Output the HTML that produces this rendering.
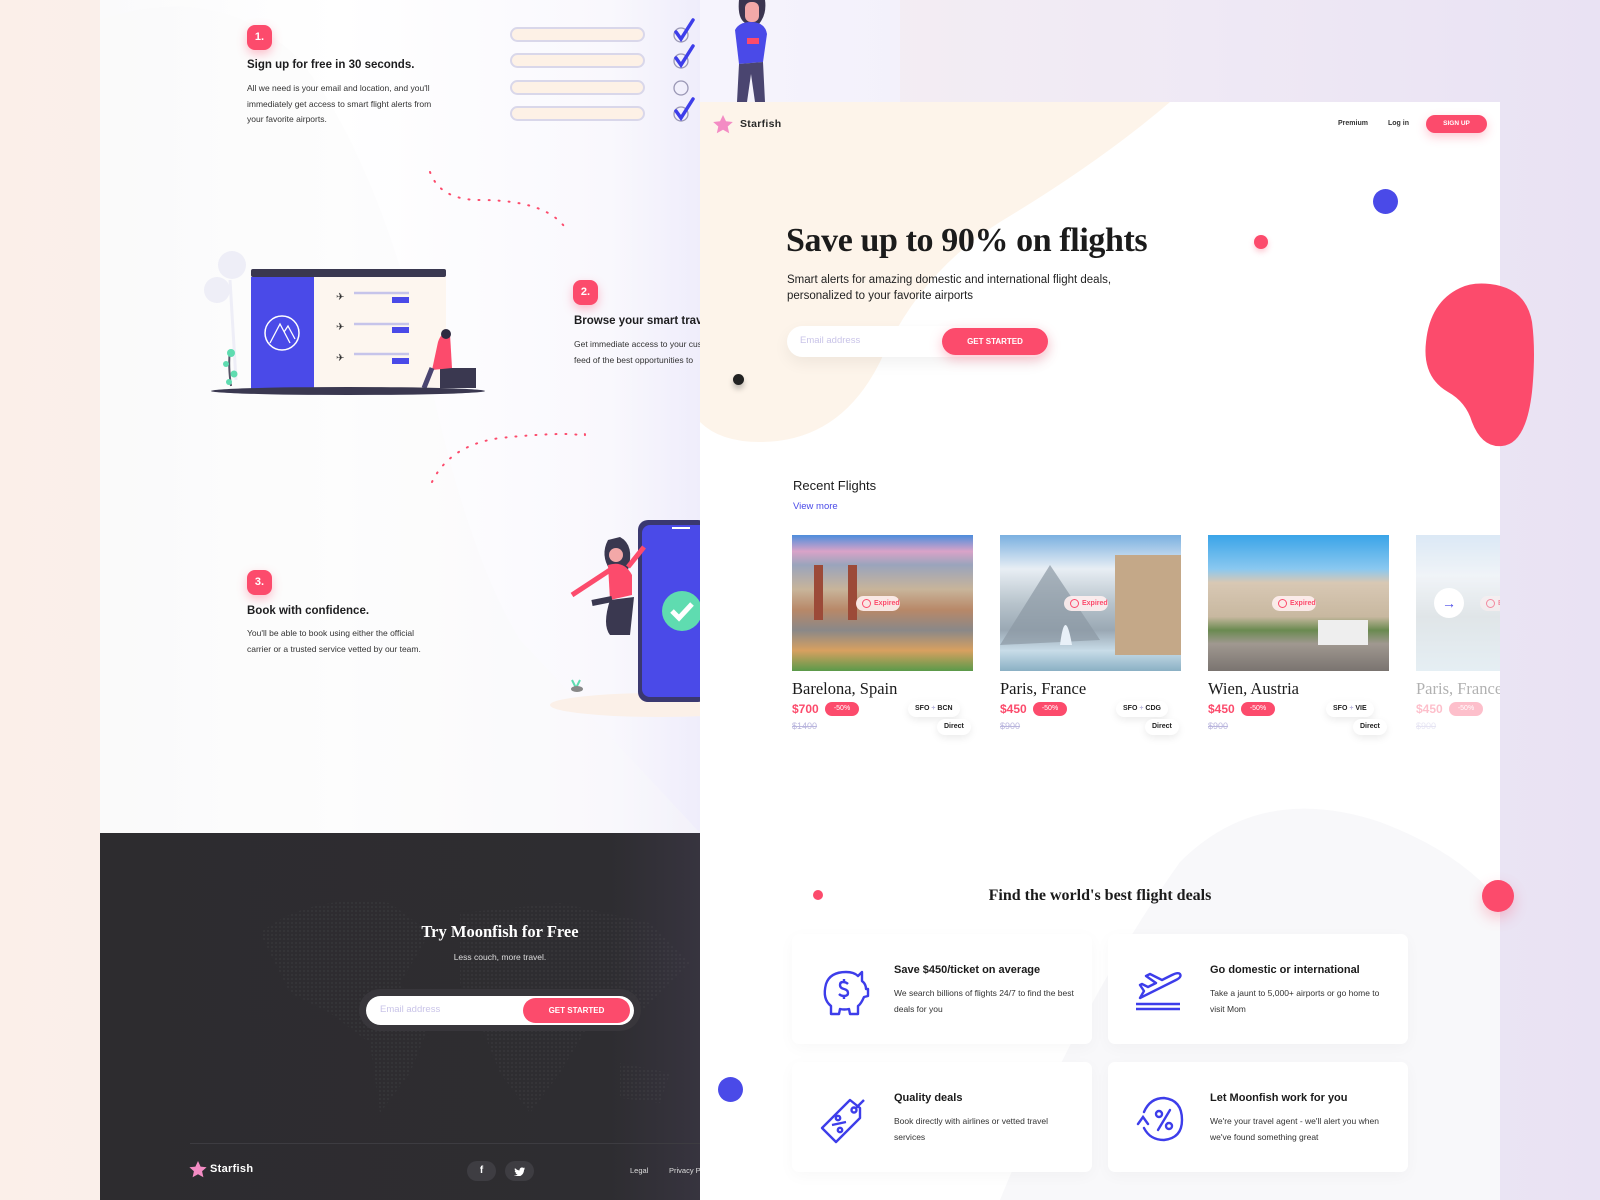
<!DOCTYPE html>
<html><head><meta charset="utf-8">
<style>
*{margin:0;padding:0;box-sizing:border-box}
body{width:1600px;height:1200px;overflow:hidden;position:relative;font-family:"Liberation Sans",sans-serif;color:#222;
background:linear-gradient(90deg,#fbefe9 0%,#f7f0f1 40%,#efe9f5 75%,#e9e2f3 100%)}
.a{position:absolute}
.serif{font-family:"Liberation Serif","DejaVu Serif",serif;font-weight:bold}
.badge{position:absolute;width:25px;height:25px;border-radius:8px;background:#fc4b6c;color:#fff;font-size:11px;font-weight:bold;text-align:center;line-height:25px;box-shadow:0 4px 10px rgba(252,75,108,.35)}
.h3{position:absolute;font-size:11.5px;font-weight:bold;color:#1d1d1f}
.p{position:absolute;font-size:8.5px;line-height:15.5px;color:#333}
.bar{position:absolute;left:510px;width:135px;height:15px;border:2px solid #d9d7ea;border-radius:8px;background:#fdf1e6}
.card{position:absolute;top:535px;width:181px;height:136px;overflow:hidden}
.exp{position:absolute;left:64px;top:61px;width:44px;height:15px;background:rgba(255,240,240,.9);border-radius:8px;color:#fc4b6c;font-size:7px;line-height:15px;padding-left:18px;font-weight:bold}
.exp:before{content:"";position:absolute;left:6px;top:3px;width:7px;height:7px;border:1.3px solid #fc4b6c;border-radius:50%}
.city{position:absolute;top:679px;font-size:16.5px;color:#1b1b1b}
.price{position:absolute;top:702px;font-size:12px;color:#fc4b6c;font-weight:bold}
.off{position:absolute;top:702px;width:34px;height:14px;border-radius:7px;background:#fc4b6c;color:#fff;font-size:7px;text-align:center;line-height:14px}
.old{position:absolute;top:721px;font-size:9px;color:#b9b5dd;text-decoration:line-through}
.route{position:absolute;top:701px;height:16px;padding:0 7px;border-radius:8px;background:#fff;box-shadow:0 3px 8px rgba(0,0,0,.08);font-size:7px;font-weight:bold;line-height:16px;color:#222}
.dir{position:absolute;top:719px;height:16px;padding:0 7px;border-radius:8px;background:#fff;box-shadow:0 3px 8px rgba(0,0,0,.08);font-size:7px;font-weight:bold;line-height:16px}
.feat{position:absolute;width:300px;height:110px;background:#fff;border-radius:7px;box-shadow:0 4px 16px rgba(0,0,0,.03)}
.feat b{position:absolute;left:102px;top:30px;font-size:11px;color:#1b1b1b}
.feat span{position:absolute;left:102px;top:52px;font-size:8.5px;line-height:15.5px;color:#333;width:180px}
.feat svg{position:absolute;left:24px;top:28px}
</style></head><body>

<!-- left panel -->
<div class="a" style="left:100px;top:0;width:600px;height:833px;background:linear-gradient(90deg,#fafafb 0%,#fff 40%,#f9f8fd 85%,#efedfb 100%);overflow:hidden">
  <svg class="a" style="left:0;top:0" width="600" height="833"><path d="M0 20 Q120 -20 200 60 Q280 160 330 380 Q370 560 420 640 L600 833 L0 833Z" fill="#f8f8f9" opacity=".35"/></svg>
</div>
<div class="a" style="left:700px;top:0;width:200px;height:102px;background:linear-gradient(90deg,#f6f4fd,#f3f1fb)"></div>

<div class="badge" style="left:247px;top:25px">1.</div>
<div class="h3" style="left:247px;top:59px">Sign up for free in 30 seconds.</div>
<div class="p" style="left:247px;top:81px">All we need is your email and location, and you'll<br>immediately get access to smart flight alerts from<br>your favorite airports.</div>
<div class="bar" style="top:27px"></div><div class="bar" style="top:53px"></div><div class="bar" style="top:80px"></div><div class="bar" style="top:106px"></div>
<svg class="a" style="left:670px;top:15px" width="30" height="110">
 <g fill="none" stroke="#9a97b5" stroke-width="1.3"><circle cx="11" cy="20" r="7"/><circle cx="11" cy="46" r="7"/><circle cx="11" cy="73" r="7"/><circle cx="11" cy="99" r="7"/></g>
 <g fill="none" stroke="#3d3dea" stroke-width="3.5" stroke-linecap="round"><path d="M6 17l5 7 12-19"/><path d="M6 43l5 7 12-19"/><path d="M6 96l5 7 12-19"/></g>
</svg>
<svg class="a" style="left:725px;top:0" width="60" height="102">
 <path d="M14 0 Q12 20 22 24 L34 24 Q42 14 40 0Z" fill="#3b3550"/>
 <rect x="20" y="2" width="14" height="20" rx="6" fill="#f3a8a8"/>
 <path d="M10 30 Q14 22 26 22 Q40 22 42 34 L38 62 L14 64Z" fill="#4a4ae8"/>
 <rect x="22" y="38" width="12" height="6" fill="#fc4b6c"/>
 <path d="M14 64 L12 102 L22 102 L26 74 L30 102 L40 102 L38 62Z" fill="#4a4570"/>
</svg>

<svg class="a" style="left:420px;top:170px" width="170" height="320">
 <path d="M10 2 Q20 30 60 30 Q130 30 148 62" fill="none" stroke="#fc4b6c" stroke-width="2" stroke-dasharray="1 9" stroke-linecap="round"/>
 <path d="M12 312 Q30 275 80 268 Q140 262 160 265 Q170 268 160 258" fill="none" stroke="#fc4b6c" stroke-width="2" stroke-dasharray="1 9" stroke-linecap="round"/>
</svg>

<svg class="a" style="left:200px;top:240px" width="300" height="160">
 <circle cx="32" cy="25" r="14" fill="#eeeef7"/><circle cx="17" cy="50" r="13" fill="#eeeef7"/><path d="M30 40 L36 140" stroke="#eeeef7" stroke-width="3"/>
 <rect x="51" y="29" width="195" height="121" fill="#fdf6ef"/>
 <rect x="51" y="29" width="195" height="8" rx="2" fill="#3a3850"/>
 <rect x="51" y="37" width="63" height="113" fill="#4a4ae8"/>
 <circle cx="82" cy="93" r="17" fill="none" stroke="#fff" stroke-width="1.5"/><path d="M70 103 L80 84 L90 103 M84 92 L88 86 L95 99" fill="none" stroke="#fff" stroke-width="1.3"/>
 <g fill="#4a4ae8"><rect x="192" y="57" width="17" height="6"/><rect x="192" y="87" width="17" height="6"/><rect x="192" y="118" width="17" height="6"/></g>
 <g stroke="#c6c4ea" stroke-width="2.5"><path d="M154 53h55M154 84h55M154 114h55"/></g>
 <g fill="#333" font-size="10"><text x="136" y="60">✈</text><text x="136" y="90">✈</text><text x="136" y="121">✈</text></g>
 <rect x="240" y="128" width="36" height="20" fill="#3a3850"/>
 <path d="M238 102 Q242 90 250 94 L252 128 L232 130Z" fill="#fc4b6c"/><circle cx="246" cy="94" r="5" fill="#2f2b40"/>
 <path d="M232 128 L224 148" stroke="#4a4570" stroke-width="5"/>
 <ellipse cx="148" cy="151" rx="137" ry="4" fill="#3a3850"/>
 <path d="M31 146 Q28 125 30 110" stroke="#556" stroke-width="2" fill="none"/><g fill="#5fdcb0"><circle cx="31" cy="113" r="4"/><circle cx="26" cy="124" r="3"/><circle cx="34" cy="134" r="3.5"/><circle cx="29" cy="142" r="3"/></g>
</svg>

<div class="badge" style="left:573px;top:280px">2.</div>
<div class="h3" style="left:574px;top:315px;width:126px;overflow:hidden;white-space:nowrap">Browse your smart travel</div>
<div class="p" style="left:574px;top:337px;width:126px;overflow:hidden;white-space:nowrap">Get immediate access to your custom<br>feed of the best opportunities to</div>

<div class="badge" style="left:247px;top:570px">3.</div>
<div class="h3" style="left:247px;top:605px">Book with confidence.</div>
<div class="p" style="left:247px;top:626px">You'll be able to book using either the official<br>carrier or a trusted service vetted by our team.</div>

<svg class="a" style="left:540px;top:515px" width="160" height="210">
 <ellipse cx="120" cy="190" rx="110" ry="12" fill="#fbf0e8"/>
 <rect x="98" y="5" width="70" height="182" rx="10" fill="#3a3870"/>
 <rect x="102" y="10" width="66" height="172" rx="8" fill="#4a4ae8"/>
 <rect x="132" y="12" width="18" height="2" fill="#fff"/>
 <circle cx="142" cy="96" r="20" fill="#5fdcb0"/><path d="M132 96 l7 7 13 -14" stroke="#fff" stroke-width="5" fill="none"/>
 <path d="M68 25 Q60 40 70 55 L88 55 Q95 30 80 22Z" fill="#3a3850"/><circle cx="76" cy="40" r="7" fill="#f3a8a8"/>
 <path d="M68 50 Q84 45 92 60 L92 80 L70 85Z" fill="#fc4b6c"/>
 <path d="M70 55 L32 80" stroke="#fc4b6c" stroke-width="5"/><path d="M88 52 L104 32" stroke="#fc4b6c" stroke-width="5"/>
 <path d="M70 85 Q62 110 70 120 L90 120 L94 82Z" fill="#3a3850"/><path d="M72 84 L52 88" stroke="#3a3850" stroke-width="6"/>
 <path d="M32 165 l4 8 4 -8" stroke="#5fdcb0" stroke-width="2" fill="none"/><ellipse cx="37" cy="174" rx="6" ry="3" fill="#888"/>
</svg>

<!-- dark footer -->
<div class="a" style="left:100px;top:833px;width:600px;height:367px;background:linear-gradient(90deg,#2d2c2f 0%,#2e2d31 85%,#37343f 100%);overflow:hidden">
 <svg class="a" style="left:130px;top:40px" width="470" height="290" opacity=".1">
  <defs><pattern id="dp" width="4" height="4" patternUnits="userSpaceOnUse"><circle cx="2" cy="2" r="1" fill="#888"/></pattern></defs>
  <path d="M30 60 Q80 20 160 30 L200 60 L170 110 L200 150 L180 200 L150 240 L140 170 L100 140 L60 120Z M230 40 L330 30 L420 50 L460 90 L410 140 L360 150 L330 200 L300 240 L270 200 L250 150 L230 110Z M390 190 L440 200 L430 230 L390 225Z" fill="url(#dp)"/>
 </svg>
 <div class="a" style="left:90px;top:310px;width:510px;height:1px;background:#3d3c41"></div>
</div>
<div class="a serif" style="left:350px;top:922px;width:300px;text-align:center;color:#fff;font-size:16.5px">Try Moonfish for Free</div>
<div class="a" style="left:350px;top:952px;width:300px;text-align:center;color:#ddd;font-size:8.5px">Less couch, more travel.</div>
<div class="a" style="left:359px;top:989px;width:282px;height:42px;border-radius:21px;background:#38363b"></div>
<div class="a" style="left:366px;top:996px;width:268px;height:29px;border-radius:15px;background:#fff"></div>
<div class="a" style="left:380px;top:1004px;font-size:9.5px;color:#c9c4e8">Email address</div>
<div class="a" style="left:523px;top:998px;width:107px;height:25px;border-radius:13px;background:#fc4b6c;color:#fff;font-size:8px;font-weight:bold;text-align:center;line-height:25px">GET STARTED</div>
<svg class="a" style="left:189px;top:1161px" width="18" height="17"><path d="M9 0l2.6 5.6 6 .6-4.5 4 1.3 6L9 13.2 3.6 16.2l1.3-6L.4 6.2l6-.6z" fill="#f38cc4"/></svg>
<div class="a" style="left:210px;top:1163px;color:#fff;font-size:11px;font-weight:bold;letter-spacing:.3px">Starfish</div>
<div class="a" style="left:467px;top:1161px;width:29px;height:20px;border-radius:10px;background:#3e3d42;color:#fff;font-size:10px;font-weight:bold;text-align:center;line-height:20px">f</div>
<div class="a" style="left:505px;top:1161px;width:29px;height:20px;border-radius:10px;background:#3e3d42"><svg class="a" style="left:9px;top:6px" width="11" height="9"><path d="M11 1.2c-.4.2-.8.3-1.3.4.5-.3.8-.7 1-1.2-.4.3-.9.4-1.4.5C8.8.3 7.2.2 6.2 1.2 5.6 1.8 5.4 2.6 5.6 3.4 3.8 3.300 2.1 2.5 1 1.1.4 2.1.7 3.4 1.7 4c-.4 0-.7-.1-1-.3 0 1.1.8 2 1.8 2.2-.3.1-.7.1-1 0 .3.9 1.2 1.6 2.1 1.6C2.6 8.3 1.3 8.7 0 8.5 1.1 9.2 2.4 9.6 3.5 9.6c4.2 0 6.6-3.6 6.5-6.8.4-.3.8-.7 1-1.6z" fill="#fff"/></svg></div>
<div class="a" style="left:630px;top:1166px;color:#ddd;font-size:7.5px">Legal</div>
<div class="a" style="left:669px;top:1166px;color:#ddd;font-size:7.5px;width:31px;overflow:hidden;white-space:nowrap">Privacy Policy</div>

<!-- right panel -->
<div class="a" style="left:700px;top:102px;width:800px;height:1098px;background:#fff;overflow:hidden">
 <svg class="a" style="left:0;top:0" width="800" height="1098">
  <path d="M0 0 L470 0 Q400 60 300 120 Q220 170 180 260 Q140 340 60 340 Q20 340 0 320Z" fill="#fdf4ea"/>
  <path d="M300 1098 Q380 900 480 760 Q560 680 680 720 Q760 750 800 800 L800 1098Z" fill="#f8f8fa"/>
 </svg>
</div>
<svg class="a" style="left:713px;top:115px" width="20" height="19"><path d="M10 0l3 6.3 6.8.7-5.1 4.5 1.5 6.8L10 14.8 3.8 18.3l1.5-6.8L.2 7l6.8-.7z" fill="#f38cc4"/></svg>
<div class="a" style="left:740px;top:118px;font-size:10.5px;font-weight:bold;color:#2a2a2a;letter-spacing:.3px">Starfish</div>
<div class="a" style="left:1338px;top:120px;font-size:7px;font-weight:bold;color:#333">Premium</div>
<div class="a" style="left:1388px;top:120px;font-size:7px;font-weight:bold;color:#333">Log in</div>
<div class="a" style="left:1426px;top:115px;width:61px;height:18px;border-radius:9px;background:#fc4b6c;color:#fff;font-size:6.5px;font-weight:bold;text-align:center;line-height:18px;box-shadow:0 4px 10px rgba(252,75,108,.3)">SIGN UP</div>

<div class="a" style="left:1373px;top:189px;width:25px;height:25px;border-radius:50%;background:#4a4ae8"></div>
<div class="a" style="left:1254px;top:235px;width:14px;height:14px;border-radius:50%;background:#fc4b6c;box-shadow:0 3px 6px rgba(252,75,108,.3)"></div>
<div class="a" style="left:733px;top:374px;width:11px;height:11px;border-radius:50%;background:#222;box-shadow:0 4px 6px rgba(0,0,0,.25)"></div>
<svg class="a" style="left:1420px;top:282px" width="140" height="168"><path d="M40 6 Q10 20 6 60 Q2 95 28 110 Q46 120 52 140 Q62 166 82 164 Q106 162 112 110 Q116 70 112 40 Q106 6 70 2 Q52 0 40 6Z" fill="#fc4b6c"/></svg>

<div class="a serif" style="left:786px;top:222px;font-size:34px;color:#1b1b1b;letter-spacing:-.4px">Save up to 90% on flights</div>
<div class="a" style="left:787px;top:273px;font-size:11.5px;line-height:15.5px;color:#222">Smart alerts for amazing domestic and international flight deals,<br>personalized to your favorite airports</div>
<div class="a" style="left:787px;top:326px;width:261px;height:31px;border-radius:16px;background:#fff;box-shadow:0 6px 16px rgba(0,0,0,.06)"></div>
<div class="a" style="left:800px;top:335px;font-size:9.5px;color:#c9c4e8">Email address</div>
<div class="a" style="left:942px;top:328px;width:106px;height:27px;border-radius:14px;background:#fc4b6c;color:#fff;font-size:8px;font-weight:bold;text-align:center;line-height:27px;box-shadow:0 4px 12px rgba(252,75,108,.35)">GET STARTED</div>

<div class="a" style="left:793px;top:478px;font-size:13px;color:#1b1b1b">Recent Flights</div>
<div class="a" style="left:793px;top:501px;font-size:9.5px;color:#4a4ae8">View more</div>

<div class="card" style="left:792px;background:linear-gradient(180deg,#4d8ddc 0%,#d9a3c8 12%,#9aa4bc 22%,#c8b49a 40%,#b88868 55%,#8a8888 70%,#d8a060 85%,#5a9a4a 100%)">
 <div class="a" style="left:22px;top:30px;width:9px;height:55px;background:#9c4a38"></div><div class="a" style="left:56px;top:30px;width:9px;height:55px;background:#9c4a38"></div>
 <div class="exp">Expired</div></div>
<div class="card" style="left:1000px;background:linear-gradient(180deg,#7ab0e0 0%,#e8eef4 25%,#b8c4cc 50%,#9aa8b4 70%,#c8dce8 85%,#8ab0c4 100%)">
 <svg class="a" style="left:0;top:0" width="181" height="136"><path d="M0 110 L50 30 L100 105Z" fill="#8b98a4" opacity=".7"/><rect x="115" y="20" width="66" height="100" fill="#c4a888"/><path d="M60 110 Q65 70 72 110Z" fill="#e8f0f8"/></svg>
 <div class="exp">Expired</div></div>
<div class="card" style="left:1208px;background:linear-gradient(180deg,#3aa4e8 0%,#8ac8f0 25%,#d8c8b4 35%,#c8b8a0 60%,#6a8a50 70%,#a09890 80%,#7a7470 100%)">
 <div class="a" style="left:110px;top:85px;width:50px;height:25px;background:#eee"></div>
 <div class="exp">Expired</div></div>
<div class="card" style="left:1416px;width:84px;background:linear-gradient(180deg,#c8dcf0,#e8eef4 30%,#d0d8dc 60%,#d8e6ee)">
 <div class="a" style="left:0;top:0;width:84px;height:136px;background:rgba(255,255,255,.35)"></div>
 <div class="a" style="left:18px;top:53px;width:30px;height:30px;border-radius:50%;background:#fff;color:#4a4ae8;font-size:14px;text-align:center;line-height:30px">→</div>
 <div class="exp" style="left:64px;opacity:.6">Expired</div></div>

<div class="city serif" style="left:792px;font-weight:normal">Barelona, Spain</div>
<div class="price" style="left:792px">$700</div><div class="off" style="left:825px">-50%</div><div class="old" style="left:792px">$1400</div>
<div class="route" style="left:908px">SFO <span style="color:#b9b5dd">+</span> BCN</div><div class="dir" style="left:937px">Direct</div>
<div class="city serif" style="left:1000px;font-weight:normal">Paris, France</div>
<div class="price" style="left:1000px">$450</div><div class="off" style="left:1033px">-50%</div><div class="old" style="left:1000px">$900</div>
<div class="route" style="left:1116px">SFO <span style="color:#b9b5dd">+</span> CDG</div><div class="dir" style="left:1145px">Direct</div>
<div class="city serif" style="left:1208px;font-weight:normal">Wien, Austria</div>
<div class="price" style="left:1208px">$450</div><div class="off" style="left:1241px">-50%</div><div class="old" style="left:1208px">$900</div>
<div class="route" style="left:1326px">SFO <span style="color:#b9b5dd">+</span> VIE</div><div class="dir" style="left:1353px">Direct</div>
<div class="a" style="left:1416px;top:679px;width:84px;height:60px;overflow:hidden;opacity:.35">
 <div class="serif" style="position:absolute;left:0;top:0;font-size:16.5px;font-weight:normal;white-space:nowrap">Paris, France</div>
 <div style="position:absolute;left:0;top:23px;font-size:12px;color:#fc4b6c;font-weight:bold">$450</div>
 <div style="position:absolute;left:33px;top:23px;width:34px;height:14px;border-radius:7px;background:#fc4b6c;color:#fff;font-size:7px;text-align:center;line-height:14px">-50%</div>
 <div style="position:absolute;left:0;top:42px;font-size:9px;color:#b9b5dd;text-decoration:line-through">$900</div>
</div>

<div class="a" style="left:813px;top:890px;width:10px;height:10px;border-radius:50%;background:#fc4b6c"></div>
<div class="a" style="left:1482px;top:880px;width:32px;height:32px;border-radius:50%;background:#fc4b6c;box-shadow:0 6px 14px rgba(252,75,108,.3)"></div>
<div class="a" style="left:718px;top:1077px;width:25px;height:25px;border-radius:50%;background:#4a4ae8"></div>
<div class="a serif" style="left:900px;top:887px;width:400px;text-align:center;font-size:16px;color:#1b1b1b">Find the world's best flight deals</div>

<div class="feat" style="left:792px;top:934px">
 <svg width="56" height="56" viewBox="0 0 56 56" fill="none" stroke="#3d3dea" stroke-width="2.4" stroke-linejoin="round"><path d="M10 22 Q14 10 30 10 Q38 10 42 14 L46 10 L46 19 Q50 22 50 27 L52 27 L52 34 L48 35 Q45 42 42 44 L42 52 L34 52 L33 47 Q28 48 24 47 L23 52 L15 52 L15 44 Q6 37 10 22Z"/><path d="M32 22 Q30 20 27 20 Q24 20 24 23 Q24 26 28 27 Q32 28 32 31 Q32 34 28 34 Q25 34 23 32 M28 17v3 M28 34v3"/></svg>
 <b>Save $450/ticket on average</b><span>We search billions of flights 24/7 to find the best deals for you</span></div>
<div class="feat" style="left:1108px;top:934px">
 <svg width="56" height="56" viewBox="0 0 56 56" fill="none" stroke="#3d3dea" stroke-width="2.4" stroke-linejoin="round"><path d="M8 36 L44 18 Q50 15 48 12 Q46 10 40 13 L30 18 L18 12 L14 14 L24 21 L16 25 L10 22 L8 23 L12 29Z"/><path d="M4 42h44M4 47h44"/></svg>
 <b>Go domestic or international</b><span>Take a jaunt to 5,000+ airports or go home to visit Mom</span></div>
<div class="feat" style="left:792px;top:1062px">
 <svg width="56" height="56" viewBox="0 0 56 56" fill="none" stroke="#3d3dea" stroke-width="2.4" stroke-linejoin="round"><path d="M34 10 L44 18 L44 28 L20 52 L6 38 L30 14Z"/><circle cx="38" cy="20" r="2.5"/><path d="M40 18 L48 10"/><circle cx="22" cy="28" r="2.2"/><circle cx="24" cy="40" r="2.2"/><path d="M16 35 L30 32"/></svg>
 <b>Quality deals</b><span>Book directly with airlines or vetted travel services</span></div>
<div class="feat" style="left:1108px;top:1062px">
 <svg width="56" height="56" viewBox="0 0 56 56" fill="none" stroke="#3d3dea" stroke-width="2.4" stroke-linecap="round"><path d="M12 22 Q18 8 32 8 Q50 10 50 30 Q50 48 32 50 Q18 50 12 38"/><path d="M6 34 L11 27 L16 34"/><circle cx="27" cy="24" r="3"/><circle cx="37" cy="36" r="3"/><path d="M38 20 L26 40"/></svg>
 <b>Let Moonfish work for you</b><span>We're your travel agent - we'll alert you when we've found something great</span></div>

</body></html>
